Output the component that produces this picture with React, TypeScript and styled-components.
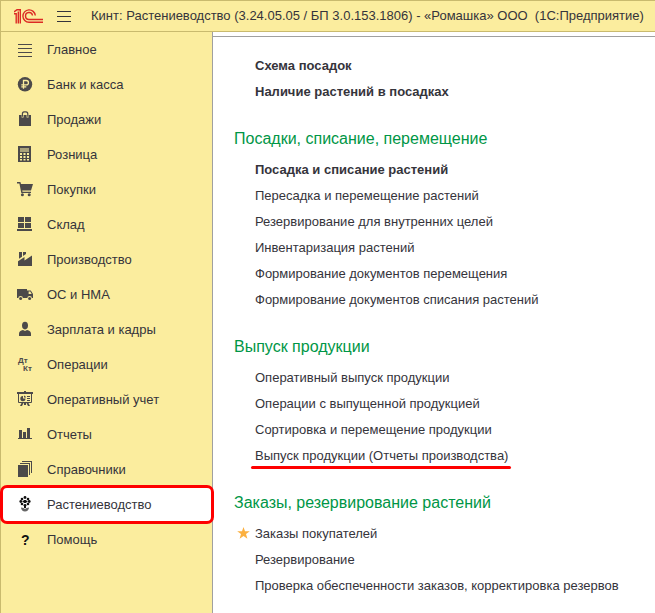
import React from "react";
import styled, { createGlobalStyle, css } from "styled-components";

const ink = "#35343b";
const icon = "#4c4a4a";
const sand = "#fbed9e";
const edge = "#c9ba6e";

const GlobalStyle = createGlobalStyle`
  * { box-sizing: border-box; }
  body {
    margin: 0;
    background: #fff;
    color: ${ink};
    font: 13px/16px "Liberation Sans", Arial, sans-serif;
  }
`;

const Shell = styled.div`
  display: flex;
  flex-direction: column;
  min-height: 100vh;
  border-left: 1px solid ${edge};
`;

const TitleBar = styled.header`
  display: flex;
  align-items: center;
  height: 32px;
  padding-left: 13px;
  border-top: 1px solid ${edge};
  border-bottom: 1px solid ${edge};
  background: ${sand};
`;

const MenuButton = styled.button`
  display: flex;
  margin: 0 20px 0 14px;
  padding: 0;
  border: 0;
  background: none;
  cursor: pointer;
`;

const Title = styled.h1`
  margin: 0;
  font-size: 13px;
  font-weight: 400;
  white-space: pre;
`;

const Body = styled.div`
  display: flex;
  flex: 1;
`;

const Sidebar = styled.nav`
  flex: 0 0 211px;
  background: ${sand};
`;

const NavLink = styled.a<{ $active?: boolean }>`
  position: relative;
  display: flex;
  align-items: center;
  gap: 13px;
  height: 35px;
  padding-left: 15px;
  color: ${ink};
  text-decoration: none;
  white-space: nowrap;

  ${(p) =>
    p.$active &&
    css`
      z-index: 1;
      &::before {
        content: "";
        position: absolute;
        z-index: -1;
        inset: -2px -2px -2px -1px;
        border: 3px solid #fe0000;
        border-radius: 7px;
        background: #fff;
      }
    `}
`;

const Content = styled.main`
  flex: 1;
  min-width: 0;
  padding-top: 4px;
  border-left: 1px solid #a0a0a0;
`;

const Panel = styled.div`
  padding: 16px 16px 14px 21px;
  border-top: 1px solid #a0a0a0;
`;

const Section = styled.section`
  & + & {
    margin-top: 21px;
  }
`;

const Heading = styled.h2`
  margin: 0 0 5px;
  color: #009646;
  font-size: 16px;
  font-weight: 400;
  line-height: 26px;
`;

const List = styled.ul`
  margin: 0;
  padding: 0 0 0 21px;
  list-style: none;
`;

const Item = styled.li`
  position: relative;
  line-height: 26px;
`;

const Command = styled.a<{ $bold?: boolean; $marked?: boolean }>`
  position: relative;
  display: inline-block;
  color: ${ink};
  font-weight: ${(p) => (p.$bold ? 700 : 400)};
  text-decoration: none;
  white-space: nowrap;
  vertical-align: top;

  ${(p) =>
    p.$marked &&
    css`
      &::after {
        content: "";
        position: absolute;
        left: -4px;
        right: -3px;
        bottom: 0;
        height: 3px;
        border-radius: 2px;
        background: #fe0000;
      }
    `}
`;

const Star = styled.svg`
  position: absolute;
  left: -18px;
  top: 6px;
`;

const Glyph = styled.svg`
  flex: none;
  display: block;
  width: 18px;
  height: 17px;
  fill: ${icon};
  font: 700 8px "Liberation Sans", Arial, sans-serif;
`;

const icons: Record<string, React.ReactNode> = {
  main: <path d="M2 3h14v1H2zM2 7h14v1H2zM2 11h14v1H2zM2 15h14v1H2z" />,
  bank: (
    <>
      <circle cx="9" cy="8.3" r="7.2" />
      <path d="M7.5 12.8V4.5h2.8a2.1 2.1 0 0 1 0 4.3H5.3M5.3 10.8h5" fill="none" stroke={sand} strokeWidth="1.3" />
    </>
  ),
  bag: (
    <>
      <path d="M3 4h2.6v2.5h2V4h3v2.5h2V4H15v11H3z" />
      <path d="M6.4 5.8V2.9C6.4 1.7 7 .8 8 .8h2c1 0 1.8.9 1.8 2.1v2.9" fill="none" stroke={icon} strokeWidth="1.2" />
    </>
  ),
  calc: (
    <>
      <path d="M2 0h13v16H2z" />
      <path d="M4 2h9v4H4z" fill="#aaa27a" />
      <path d="M4 7h2v2H4zM7.5 7h2v2h-2zM11 7h2v2h-2zM4 10h2v2H4zM7.5 10h2v2h-2zM11 10h2v2h-2zM4 13h2v1.5H4zM7.5 13h2v1.5h-2zM11 13h2v1.5h-2z" fill={sand} />
    </>
  ),
  cart: (
    <>
      <path d="M1 1h3.4l.6 2h12l-2 6.6H6.2l.3 1.2H15V12H5.3L3.4 2.4H1z" />
      <circle cx="6.4" cy="13.7" r="1.5" />
      <circle cx="13.2" cy="13.7" r="1.5" />
    </>
  ),
  stock: <path d="M2 1h6v5H2zM9 1h6v5H9zM2 7h6v5H2zM9 7h6v5H9zM1 13h15v2H1z" />,
  factory: (
    <>
      <path d="M2 15V10.3L8.5 6v3.6L16 4.4V15z" />
      <path d="M3 1h3v4.8L3 7.8zM7 1h3v2L7 5z" />
    </>
  ),
  truck: (
    <>
      <path d="M1 3h10v9H1zM11 4.5h3.8L17 8v4h-6z" />
      <path d="M12.6 5.6h1.7l1.4 2.3h-3.1z" fill={sand} />
      <circle cx="4.6" cy="12.2" r="2.3" fill={sand} />
      <circle cx="13.6" cy="12.2" r="2.3" fill={sand} />
      <circle cx="4.6" cy="12.4" r="1.5" />
      <circle cx="13.6" cy="12.4" r="1.5" />
    </>
  ),
  person: (
    <>
      <ellipse cx="9" cy="4.6" rx="3" ry="3.8" />
      <path d="M3 15v-2.2C3 10.5 4.6 9.8 7 9l2 1 2-1c2.4 .8 4 1.5 4 3.8V15z" />
    </>
  ),
  ops: (
    <>
      <text x="2" y="7">Дт</text>
      <text x="7" y="15">Кт</text>
    </>
  ),
  board: (
    <>
      <path d="M8 0h2v1h7v2H1V1h7z" />
      <path d="M2.5 2.5h13v9h-13z" fill="none" stroke={icon} />
      <path d="M7 5v2.5h2.5A2.6 2.6 0 1 1 7 5zM11 5h3v1h-3zM11 7h3v1h-3zM11 9h3v1h-3z" />
      <path d="M8 4.4a2.4 2.4 0 0 1 2 2.2H8zM8 12h2v2H8zM5.5 12h2L6 15H4zM10.500 12h2l1.500 3h-2z" />
    </>
  ),
  chart: <path d="M3 4h3v8H3zM7 6h3v6H7zM11 2h3v10h-3zM2 12h14v1H2z" />,
  books: <path d="M2 4h10v12H2zM4 2h10v12h-1V3H4zM6 0h10v12h-1V1H6z" />,
  plant: (
    <g fill="#111">
      <path d="M8 4h2v3H8zM8 9h2v3H8z" />
      <circle cx="9" cy="1.5" r="1.4" />
      <circle cx="6" cy="3" r="1.3" />
      <circle cx="12" cy="3" r="1.3" />
      <circle cx="4.8" cy="5.5" r="1.4" />
      <circle cx="13.2" cy="5.5" r="1.4" />
      <circle cx="7.5" cy="5.5" r="1" />
      <circle cx="10.5" cy="5.5" r="1" />
      <circle cx="6" cy="8" r="1.3" />
      <circle cx="12" cy="8" r="1.3" />
      <circle cx="9" cy="9.3" r="1.4" />
      <path d="M5 11.500l2.500.5L9 13l1.500-1 2.500-.5c0 2-1.500 4-4 4s-4-2-4-4z" fill="#666" />
    </g>
  ),
  help: <text x="5" y="14" fontSize="14" fill="#111">?</text>,
};

const nav: [string, string][] = [
  ["main", "Главное"],
  ["bank", "Банк и касса"],
  ["bag", "Продажи"],
  ["calc", "Розница"],
  ["cart", "Покупки"],
  ["stock", "Склад"],
  ["factory", "Производство"],
  ["truck", "ОС и НМА"],
  ["person", "Зарплата и кадры"],
  ["ops", "Операции"],
  ["board", "Оперативный учет"],
  ["chart", "Отчеты"],
  ["books", "Справочники"],
  ["plant", "Растениеводство"],
  ["help", "Помощь"],
];

interface Entry {
  text: string;
  bold?: boolean;
  marked?: boolean;
  starred?: boolean;
}

const sections: { title?: string; items: Entry[] }[] = [
  {
    items: [
      { text: "Схема посадок", bold: true },
      { text: "Наличие растений в посадках", bold: true },
    ],
  },
  {
    title: "Посадки, списание, перемещение",
    items: [
      { text: "Посадка и списание растений", bold: true },
      { text: "Пересадка и перемещение растений" },
      { text: "Резервирование для внутренних целей" },
      { text: "Инвентаризация растений" },
      { text: "Формирование документов перемещения" },
      { text: "Формирование документов списания растений" },
    ],
  },
  {
    title: "Выпуск продукции",
    items: [
      { text: "Оперативный выпуск продукции" },
      { text: "Операции с выпущенной продукцией" },
      { text: "Сортировка и перемещение продукции" },
      { text: "Выпуск продукции (Отчеты производства)", marked: true },
    ],
  },
  {
    title: "Заказы, резервирование растений",
    items: [
      { text: "Заказы покупателей", starred: true },
      { text: "Резервирование" },
      { text: "Проверка обеспеченности заказов, корректировка резервов" },
    ],
  },
];

const Logo = () => (
  <svg width="29" height="15" viewBox="0 0 29 15" fill="none" stroke="#dc2a24" strokeWidth="1.4" role="img" aria-label="1С">
    <path d="M0 4.7h2.2V14.500M0 2.900 3 .7h3.300V14.500M4.300 2.500v12" />
    <path d="M21.300 6.500A6.200 6.200 0 1 0 15 13.300h14M18.500 6.500A3.500 3.500 0 1 0 15 10.500h14" />
  </svg>
);

export default function App() {
  return (
    <>
      <GlobalStyle />
      <Shell>
        <TitleBar>
          <Logo />
          <MenuButton aria-label="Меню">
            <svg width="14" height="11" viewBox="0 0 14 11" fill={ink}>
              <path d="M0 0h14v1H0zM0 5h14v1H0zM0 10h14v1H0z" />
            </svg>
          </MenuButton>
          <Title>{"Кинт: Растениеводство (3.24.05.05 / БП 3.0.153.1806) - «Ромашка» ООО  (1С:Предприятие)"}</Title>
        </TitleBar>
        <Body>
          <Sidebar>
            {nav.map(([id, label]) => (
              <NavLink key={id} href={`#${id}`} $active={id === "plant"}>
                <Glyph viewBox="0 0 18 17" aria-hidden="true">{icons[id]}</Glyph>
                {label}
              </NavLink>
            ))}
          </Sidebar>
          <Content>
            <Panel>
              {sections.map((s, i) => (
                <Section key={i}>
                  {s.title && <Heading>{s.title}</Heading>}
                  <List>
                    {s.items.map((e) => (
                      <Item key={e.text}>
                        {e.starred && (
                          <Star width="13" height="12" viewBox="0 0 13 12" fill="#fbb040" aria-hidden="true">
                            <path d="M6.5 0 8 4.2h4.8L9 7l1.4 4.7-3.900-2.800-3.900 2.800L4 7 .2 4.200H5z" />
                          </Star>
                        )}
                        <Command href="#" $bold={e.bold} $marked={e.marked}>{e.text}</Command>
                      </Item>
                    ))}
                  </List>
                </Section>
              ))}
            </Panel>
          </Content>
        </Body>
      </Shell>
    </>
  );
}
